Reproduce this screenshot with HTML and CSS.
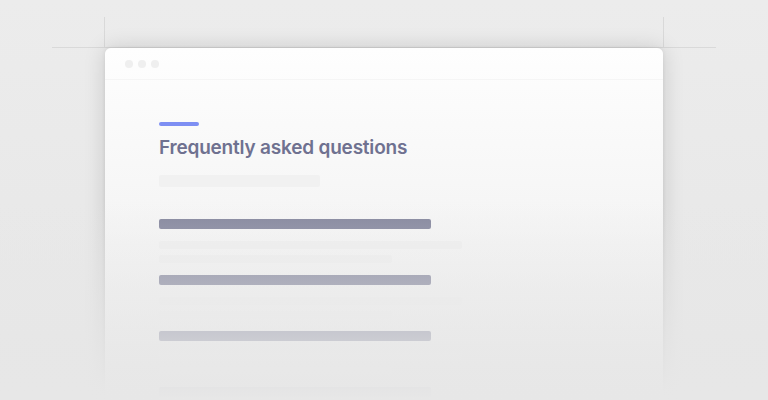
FILE: index.html
```html
<!DOCTYPE html>
<html lang="en">
<head>
<meta charset="utf-8">
<title>FAQ preview</title>
<link rel="stylesheet" href="styles.css">
</head>
<body>
<div class="stage">
  <div class="guide guide-h"></div>
  <div class="guide guide-vl"></div>
  <div class="guide guide-vr"></div>
  <div class="card">
    <div class="topbar">
      <span class="dot"></span><span class="dot"></span><span class="dot"></span>
    </div>
    <div class="content">
      <div class="accent"></div>
      <h1 class="title">Frequently asked questions</h1>
      <div class="subtitle"></div>
      <div class="faq">
        <div class="item">
          <div class="q"></div>
          <div class="a a1"></div>
          <div class="a a2"></div>
        </div>
        <div class="item">
          <div class="q"></div>
          <div class="a a1"></div>
          <div class="a a2"></div>
        </div>
        <div class="item">
          <div class="q"></div>
          <div class="a a1"></div>
          <div class="a a2"></div>
        </div>
        <div class="item">
          <div class="q"></div>
        </div>
      </div>
    </div>
  </div>
  <div class="fade"></div>
</div>
</body>
</html>
```
FILE: styles.css
```css
* { box-sizing: border-box; }
html, body {
  margin: 0;
  padding: 0;
  height: 400px;
  overflow: hidden;
}
body {
  background: linear-gradient(#ececec, #e6e6e6);
  font-family: "Inter", "Liberation Sans", sans-serif;
}
.stage {
  position: relative;
  height: 400px;
  padding-top: 48px;
  overflow: hidden;
}
.guide {
  position: absolute;
  background: #d9d9d9;
}
.guide-h { left: 52px; top: 47px; width: 664px; height: 1px; }
.guide-vl { left: 104px; top: 17px; width: 1px; height: 31px; }
.guide-vr { left: 663px; top: 17px; width: 1px; height: 31px; }
.card {
  position: relative;
  margin-left: 105px;
  width: 558px;
  height: 352px;
  border-radius: 6px 6px 0 0;
  background: linear-gradient(#fefefe, #f3f3f3 60%, #ececec);
  box-shadow: 0 0 22px rgba(0, 0, 0, 0.14), 0 0 4px rgba(0, 0, 0, 0.07);
}
.topbar {
  height: 32px;
  display: flex;
  align-items: center;
  gap: 5px;
  padding-left: 20px;
  border-bottom: 1px solid #f5f5f5;
}
.dot {
  width: 8px;
  height: 8px;
  border-radius: 50%;
  background: #efefef;
}
.content {
  padding: 42px 0 0 54px;
}
.accent {
  width: 40px;
  height: 4px;
  border-radius: 2px;
  background: #7e8ff3;
}
.title {
  margin: 10px 0 0;
  font-size: 19px;
  line-height: 23px;
  font-weight: 600;
  letter-spacing: -0.2px;
  color: #6f7190;
}
.subtitle {
  margin-top: 16px;
  width: 161px;
  height: 12px;
  border-radius: 2px;
  background: #f1f1f1;
}
.faq {
  margin-top: 32px;
}
.item {
  padding-bottom: 12px;
}
.q {
  width: 272px;
  height: 10px;
  border-radius: 2px;
  background: #83859c;
}
.a {
  height: 8px;
  border-radius: 2px;
  background: #efefef;
}
.a1 { width: 303px; margin-top: 12px; }
.a2 { width: 233px; margin-top: 6px; }
.fade {
  position: absolute;
  left: 0;
  right: 0;
  top: 200px;
  height: 200px;
  background: linear-gradient(rgba(231, 231, 231, 0), rgba(231, 231, 231, 0.7) 68%, rgba(231, 231, 231, 0.98) 95%, #e7e7e7);
  pointer-events: none;
}
```
